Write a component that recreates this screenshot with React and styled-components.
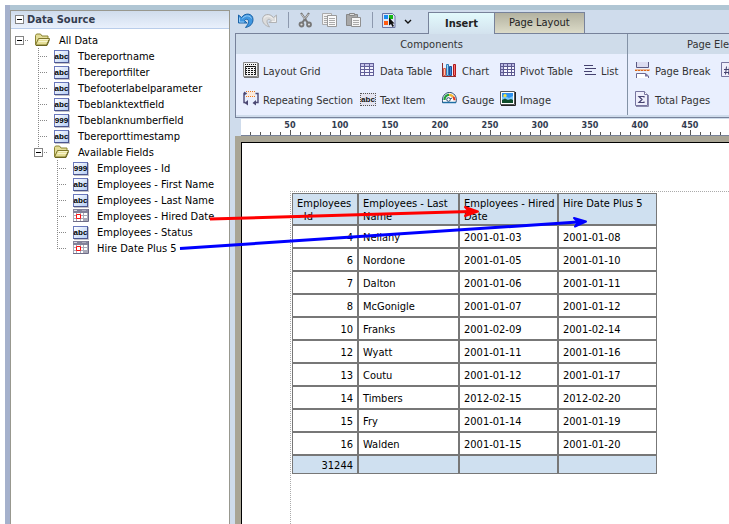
import React from 'react'
import styled, { createGlobalStyle } from 'styled-components'

const GlobalStyle = createGlobalStyle`
  * {
    box-sizing: border-box;
  }
  body {
    margin: 0;
    background: #fff;
    color: #000;
    font-family: "DejaVu Sans Condensed", "DejaVu Sans", sans-serif;
    font-size: 11px;
    line-height: 16px;
  }
  button {
    margin: 0;
    padding: 0;
    border: 0;
    background: none;
    color: inherit;
    font: inherit;
    cursor: pointer;
  }
  svg {
    display: block;
    flex: none;
  }
`

const FIELDS = [
  { name: 'Employees - Id', type: '999' },
  { name: 'Employees - First Name', type: 'abc' },
  { name: 'Employees - Last Name', type: 'abc' },
  { name: 'Employees - Hired Date', type: 'date' },
  { name: 'Employees - Status', type: 'abc' },
  { name: 'Hire Date Plus 5', type: 'date' },
]

const TREE = [
  { name: 'Tbereportname', type: 'abc' },
  { name: 'Tbereportfilter', type: 'abc' },
  { name: 'Tbefooterlabelparameter', type: 'abc' },
  { name: 'Tbeblanktextfield', type: 'abc' },
  { name: 'Tbeblanknumberfield', type: '999' },
  { name: 'Tbereporttimestamp', type: 'abc' },
  { name: 'Available Fields', children: FIELDS },
]

const ROWS = [
  ['4', 'Nellany', '2001-01-03', '2001-01-08'],
  ['6', 'Nordone', '2001-01-05', '2001-01-10'],
  ['7', 'Dalton', '2001-01-06', '2001-01-11'],
  ['8', 'McGonigle', '2001-01-07', '2001-01-12'],
  ['10', 'Franks', '2001-02-09', '2001-02-14'],
  ['12', 'Wyatt', '2001-01-11', '2001-01-16'],
  ['13', 'Coutu', '2001-01-12', '2001-01-17'],
  ['14', 'Timbers', '2012-02-15', '2012-02-20'],
  ['15', 'Fry', '2001-01-14', '2001-01-19'],
  ['16', 'Walden', '2001-01-15', '2001-01-20'],
]

const MARKS = [50, 100, 150, 200, 250, 300, 350, 400, 450]

/* ---------- icons ---------- */

const Icon = ({ children, w = 16, h = 16 }) => (
  <svg width={w} height={h} viewBox={`0 0 ${w} ${h}`} aria-hidden="true">{children}</svg>
)

const FolderIcon = () => (
  <Icon>
    <path d="M.5 12.5V3.5l1-1.500h4l1.500 2h6v3" fill="#e2dc98" stroke="#8b8433" />
    <path d="M.5 13L3.500 6.500H14.500L11.500 13Z" fill="#e6df98" stroke="#7d762a" />
    <path d="M4.500 7.500h9M3.500 9.500h9" stroke="#f8f5cf" />
    <path d="M1 13.500h11l2.500-6" fill="none" stroke="#6b651f" />
  </Icon>
)

const CalendarIcon = () => (
  <Icon>
    <path d="M0 1h15v12H0z" fill="#a9a9b8" />
    <path d="M0 1h15v4H0z" fill="#83829a" />
    <path d="M1 2.500h3" stroke="#d6d6e2" />
    <path d="M9 2.500h4" stroke="#a9a8bd" />
    <path d="M1 5h2v2H1zM4 5h3v2H4zM8 5h2v2H8zM11 5h3v2h-3zM1 8h2v2H1zM8 8h2v2H8zM11 8h3v2h-3zM1 11h2v2H1zM4 11h3v2H4zM8 11h2v2H8z" fill="#fff" />
    <path d="M3.500 6.500h4v4h-4z" fill="#fff" stroke="#ff1010" />
    <path d="M0 13.500h15.500V1" fill="none" stroke="#6d6b86" />
  </Icon>
)

const UndoIcon = () => (
  <Icon>
    <path d="M.5 3v8h8.500L6.500 8.500C8 6.500 10.500 7 10.500 9.500c0 2-1 3.500-3 6C12.500 14.500 15 11.500 15 7.500 15 1.500 7.500 0 3.500 5.500z" fill="#3f96e0" stroke="#1a62a6" strokeLinejoin="round" />
    <path d="M1.500 5.500v4.500h4.500M4.500 6.500c3-4 8-3 9 0" fill="none" stroke="#a9d8fb" strokeWidth=".8" />
  </Icon>
)

const RedoIcon = () => (
  <Icon>
    <path d="M14.500 3v7.500H7L9 8.500C7.500 6.500 5 7 5 9.500c0 2 1 3 2.500 5.500C3 13.500.500 11 .5 7.500.5 2 7.500.5 11.500 5.500z" fill="#dcdcdc" stroke="#b0b2b5" strokeLinejoin="round" />
    <path d="M13.500 5.500v4H10M10.500 6.500c-3-3.500-7-3-8.500 0" fill="none" stroke="#f8f8f8" strokeWidth=".8" />
  </Icon>
)

const CutIcon = () => (
  <Icon>
    <path d="M3 1l6.500 9.500M11 1L4.500 10.500" stroke="#777" strokeWidth="2.200" />
    <path d="M3.500 2l3.500 5M10.500 2L7.500 6" stroke="#ddd" strokeWidth=".8" />
    <circle cx="3.500" cy="12.500" r="2" fill="#ddd" stroke="#777" strokeWidth="1.800" />
    <circle cx="11" cy="12.500" r="2" fill="#ddd" stroke="#777" strokeWidth="1.800" />
  </Icon>
)

const CopyIcon = () => (
  <Icon>
    <path d="M.5 1.500h9v11h-9z" fill="#f2f2f2" stroke="#aaa" />
    <path d="M2 4.500h3M2 6.500h3M2 8.500h3M2 10.500h3" stroke="#aaa" />
    <path d="M5.500 3.500h9v11h-9z" fill="#fafafa" stroke="#999" />
    <path d="M7 6.500h6M7 8.500h6M7 10.500h6M7 12.500h6" stroke="#aaa" />
  </Icon>
)

const PasteIcon = () => (
  <Icon>
    <path d="M.5 2.500h11v11H.5z" fill="#a8a8a8" stroke="#888" />
    <path d="M3.500 1.500h5v2h-5z" fill="#ddd" stroke="#888" />
    <path d="M5.500 5.500h9v9h-9z" fill="#f6f6f6" stroke="#909090" />
    <path d="M7 8.500h6M7 10.500h6M7 12.500h6" stroke="#aaa" />
  </Icon>
)

const SelectIcon = () => (
  <Icon w={14}>
    <path d="M.5 1.500h10l2.500 2.500v11.500H.5z" fill="#dfe6f6" stroke="#6b74a2" />
    <path d="M2 3h4v4H2z" fill="#1b8df0" />
    <path d="M7 3h4v4H7z" fill="#14b514" />
    <path d="M2 9h4v4H2z" fill="#ff5a10" />
    <path d="M7 5.500v8l2-1.500 1.500 3 1.500-1-1.500-2.500h2z" fill="#111" />
  </Icon>
)

const GridIcon = () => (
  <Icon>
    <path d="M.5 .5h14v14H.5z" fill="#f4f4f4" stroke="#8a8a8a" />
    <path d="M2 2.500h11" stroke="#111" strokeDasharray="1 1" />
    <path d="M2 4.500h11" stroke="#111" />
    <path d="M2 6.500h11M2 8.500h11M2 10.500h11M2 12.500h11" stroke="#111" strokeDasharray="2 1" />
    <path d="M2.500 4v9M12.500 4v9" stroke="#333" />
    <path d="M1 15.500h14.500V1" fill="none" stroke="#777" />
  </Icon>
)

const RepeatIcon = () => (
  <Icon>
    <path d="M4 1h8v5H4z" fill="#fdeadb" />
    <path d="M3 .5h10M3 5.500h10" stroke="#ef7a1a" strokeDasharray="1 1" />
    <path d="M3.500 2.500H1v9h1.500M12.500 2.500H15v9h-3" fill="none" stroke="#4b4873" strokeWidth="1.400" />
    <path d="M1 .5l3 2-3 2zM5 9v5.500L1.500 12zM13 9l-3.500 3L13 14.500z" fill="#4b4873" />
  </Icon>
)

const TableIcon = () => (
  <Icon>
    <path d="M0 2h13v11H0z" fill="#f3f3ff" />
    <path d="M0 2h13v3H0z" fill="#c6c4ea" />
    <path d="M0 1.500h14M0 4.500h14M0 7.500h14M0 10.500h14M0 13.500h14M.5 1v13M4.500 1v13M9.500 1v13M13.500 1v13" stroke="#625f98" />
  </Icon>
)

const PivotIcon = () => (
  <Icon>
    <path d="M0 2h15v11H0z" fill="#f6f6ff" />
    <path d="M0 2h15v3H0zM0 5h3v8H0z" fill="#bfbde6" />
    <path d="M0 1.500h15M0 4.500h15M0 7.500h15M0 10.500h15M0 13.500h15M.5 1v13M3.500 1v13M7.500 1v13M11.500 1v13M14.500 1v13" stroke="#5b588f" />
  </Icon>
)

const ChartIcon = () => (
  <Icon>
    <path d="M.5 1v13.500H14" fill="none" stroke="#8b2d2d" />
    <path d="M1.500 6.500h2v7h-2z" fill="#fbc4b4" stroke="#d8604c" />
    <path d="M4.500 2.500h2v11h-2z" fill="#9fd7f8" stroke="#2f7cb8" />
    <path d="M7.500 4.500h2v9h-2z" fill="#2f8be0" stroke="#1f4f98" />
    <path d="M11.500 2.500h2v11h-2z" fill="#f57575" stroke="#b01818" />
  </Icon>
)

const GaugeIcon = () => (
  <Icon>
    <path d="M.5 11.500C-.5 5 3.500 1.500 7.500 1.500s8 3.500 6.500 10z" fill="#fff" stroke="#27466b" />
    <path d="M2.500 9C2.500 6 4.500 3.800 7 3.800" fill="none" stroke="#1f9c3a" strokeWidth="2.200" />
    <path d="M7 3.800c2 0 3.200.8 4.200 2" fill="none" stroke="#f2b632" strokeWidth="2.200" />
    <path d="M11.200 5.800c1 1 1.300 2 1.300 3.500" fill="none" stroke="#e23a1c" strokeWidth="2.200" />
    <circle cx="6.500" cy="8.500" r="1.800" fill="#fff" stroke="#27466b" />
    <path d="M8 8l2-1" stroke="#27466b" />
    <path d="M.5 11.500h13.500" stroke="#1f6fa5" strokeWidth="1.500" />
  </Icon>
)

const ImageIcon = () => (
  <Icon>
    <path d="M.5 .5h14v13H.5z" fill="#fff" stroke="#555" />
    <path d="M2 2h11v10H2z" fill="#2f92f0" />
    <path d="M2 6l3-1 4 2 4-2v4H2z" fill="#7bc8fb" />
    <path d="M2 12V9l3-1.500L8 9l3-1 2 1v3z" fill="#0e4d2b" />
    <circle cx="5" cy="4.500" r="1.600" fill="#f6e33c" />
    <path d="M1 14.500h14.500V1" fill="none" stroke="#222" />
  </Icon>
)

const ListIcon = () => (
  <Icon w={13}>
    <path d="M0 3.500h9M1 6.500h11M0 9.500h8M1 12.500h11" stroke="#45426f" />
  </Icon>
)

const BreakIcon = () => (
  <Icon>
    <path d="M1.500 0v5.500h12V0" fill="#dcdcf0" stroke="#5b5982" />
    <path d="M0 8h15" stroke="#f08030" />
    <path d="M0 8.500h15" stroke="#d8661a" strokeDasharray="2 1" />
    <path d="M1.500 16v-4.500h9l3 2.500v2" fill="#fff" stroke="#6b6991" />
    <path d="M10 11l4 3.500h-4z" fill="#7a78a3" />
  </Icon>
)

const SigmaIcon = () => (
  <Icon>
    <path d="M.5 .5h9l3 3v11H.5z" fill="#eeeefb" stroke="#77759f" />
    <path d="M9.500 .5v3h3" fill="#fff" stroke="#77759f" />
    <path d="M9 6.500v-1H4l3 3-3 3h5v-1" fill="none" stroke="#45426f" strokeWidth="1.200" />
    <path d="M1 15.500h12.500V4" fill="none" stroke="#8c8aac" />
  </Icon>
)

const NumberIcon = () => (
  <Icon>
    <path d="M.5 .5h9l3 3v11H.5z" fill="#eeeefb" stroke="#77759f" />
    <path d="M5.500 4.500l-1 8M8.500 4.500l-1 8M3 7.500h7M3 10.500h7" stroke="#45426f" />
  </Icon>
)

/* ---------- shell ---------- */

const Page = styled.div`
  display: flex;
  min-height: 100vh;
  padding: 5px 0 0 5px;
  overflow: hidden;
`

const Frame = styled.div`
  flex: 1;
  min-width: 0;
  display: flex;
  gap: 5px;
  border-left: 5px solid #a5b1cc;
  background: #cfdcec;
  box-shadow: inset 0 5px #b0c6d4;
  padding-top: 5px;
`

const SidePanel = styled.aside`
  flex: none;
  width: 220px;
  border: 1px solid #98988f;
  border-width: 1px 1px 0;
  background: #fff;
`

const PanelHeader = styled.h2`
  display: flex;
  align-items: center;
  gap: 3px;
  height: 18px;
  margin: 0;
  padding-left: 4px;
  border-bottom: 1px solid #b9cdea;
  background: linear-gradient(#cfdcec, #e9f0fc);
  color: #333c4f;
  font-size: 11px;
  font-weight: bold;
`

const Toggle = styled.button`
  width: 9px;
  height: 9px;
  flex: none;
  border: 1px solid #848484;
  background: linear-gradient(#000, #000) center / 5px 1px no-repeat #fff;
`

/* ---------- tree ---------- */

const TreeArea = styled.div`
  padding-top: 3px;
`

const Tree = styled.ul`
  margin: 0;
  padding: 0 0 0 ${props => (props.$root ? '4px' : '19px')};
  list-style: none;
`

const TreeRow = styled.div`
  display: flex;
  align-items: center;
  height: 16px;
  white-space: nowrap;
`

const TreeSlot = styled.span`
  display: flex;
  align-items: center;
  align-self: stretch;
  flex: none;
  width: 20px;
  background:
    repeating-linear-gradient(#888 0 1px, transparent 1px 2px) 4px 0 / 1px ${props => (props.$root ? '0' : props.$last ? '8px' : '16px')} no-repeat,
    repeating-linear-gradient(90deg, #888 0 1px, transparent 1px 2px) 4px 8px / 9px 1px no-repeat;
`

const TreeLabel = styled.span`
  padding: 2px 0 0 8px;
`

const Chip = styled.span`
  display: flex;
  justify-content: center;
  width: 15px;
  height: 13px;
  margin-right: 1px;
  border: 1px solid #6a78bd;
  border-right-color: #4b558f;
  border-bottom-color: #4b558f;
  background: linear-gradient(135deg, #fff, #b5cdf5);
  box-shadow: 1px 1px #c4c4cc;
  font-family: "Liberation Sans Narrow", "Liberation Sans", sans-serif;
  font-size: 8px;
  font-weight: bold;
  line-height: 11px;
`

const TypeIcon = ({ type }) => {
  if (type === 'date') return <CalendarIcon />
  return <Chip>{type}</Chip>
}

const TreeNode = ({ node, root, last }) => (
  <li>
    <TreeRow>
      <TreeSlot $root={root} $last={last}>
        {node.children && <Toggle aria-label={`Collapse ${node.name}`} />}
      </TreeSlot>
      {node.children ? <FolderIcon /> : <TypeIcon type={node.type} />}
      <TreeLabel>{node.name}</TreeLabel>
    </TreeRow>
    {node.children && (
      <Tree>
        {node.children.map((child, i) => (
          <TreeNode key={child.name} node={child} last={i === node.children.length - 1} />
        ))}
      </Tree>
    )}
  </li>
)

/* ---------- ribbon ---------- */

const Workspace = styled.main`
  flex: 1;
  min-width: 0;
  display: flex;
  flex-direction: column;
`

const TopBar = styled.div`
  display: flex;
  align-items: stretch;
  height: 24px;
  padding-top: 2px;
  box-shadow: inset 0 -1px #77829a;
`

const Tools = styled.div`
  display: flex;
  align-items: flex-start;
  gap: 8px;
  width: 193px;
  padding-left: 3px;
`

const Divider = styled.span`
  width: 1px;
  height: 16px;
  margin: 0 1px 0 2px;
  background: #8d99ae;
`

const ToolButton = styled.button`
  height: 16px;
`

const Tab = styled.button`
  padding: 0 ${props => (props.$active ? '16px' : '14px')};
  border: 1px solid #77829a;
  border-bottom-width: ${props => (props.$active ? '0' : '1px')};
  border-left-width: ${props => (props.$active ? '1px' : '0')};
  background: ${props => (props.$active ? 'linear-gradient(#e2fafc, #d3e2ee)' : 'linear-gradient(#b3b2a0, #dcdbc8)')};
  color: #222;
  font-weight: ${props => (props.$active ? 'bold' : 'normal')};
`

const Ribbon = styled.div`
  display: flex;
  overflow: hidden;
  height: 84px;
  padding: 0 0 2px;
  border-left: 1px solid #77829a;
  border-bottom: 1px solid #77829a;
`

const Group = styled.section`
  flex: none;
  width: ${props => props.$width};
  background: #e9effe;
  border-right: 1px solid #8392a6;
`

const GroupTitle = styled.h3`
  height: 20px;
  margin: 0;
  background: #cfdcea;
  color: #333;
  font-size: 11px;
  font-weight: normal;
  line-height: 22px;
  text-align: center;
`

const GroupItems = styled.div`
  display: grid;
  grid-template-columns: ${props => props.$columns};
  grid-auto-rows: 29px;
  align-items: start;
  padding: 8px 0 0 7px;
`

const RibbonButton = styled.button`
  display: flex;
  align-items: flex-start;
  gap: 4px;
  color: #333;
  text-align: left;
  white-space: nowrap;
  line-height: 20px;
`

const TextChip = styled.span`
  display: flex;
  justify-content: center;
  width: 16px;
  height: 13px;
  margin-top: 2px;
  border: 1px dotted #555;
  background: #e4e4f0;
  color: #111;
  font-family: "Liberation Sans Narrow", "Liberation Sans", sans-serif;
  font-size: 8px;
  font-weight: bold;
  line-height: 11px;
`

/* ---------- ruler and report ---------- */

const Ruler = styled.div`
  display: flex;
  overflow: hidden;
  height: 17px;
  margin: 1px 0 0 6px;
  padding-left: 24px;
  border-bottom: 1px solid #77829a;
  background:
    repeating-linear-gradient(90deg, #555 0 1px, transparent 1px 10px) 9px 100% / 100% 3px no-repeat #fff;
`

const Mark = styled.span`
  flex: none;
  width: 50px;
  background: linear-gradient(#555, #555) 25px 100% / 1px 5px no-repeat;
  color: #333c4f;
  font-size: 9px;
  font-weight: bold;
  line-height: 12px;
  text-align: center;
`

const Canvas = styled.div`
  flex: 1;
  display: flex;
  padding: 6px 0 0 6px;
  background: #a9a595;
`

const Sheet = styled.div`
  flex: 1;
  min-width: 0;
  padding: 48px 0 0 48px;
  border: 1px solid #000;
  border-width: 1px 0 0 1px;
  background: #fff;
`

const PrintArea = styled.div`
  height: 100%;
  padding: 1px;
  border: 1px dotted #aaa;
  border-width: 1px 0 0 1px;
`

const Report = styled.table`
  width: 365px;
  table-layout: fixed;
  border-collapse: separate;
  border-spacing: 0;
  line-height: 13px;

  th,
  td {
    padding: 2px 4px 0;
    border: 1px solid #777;
    font-weight: normal;
    text-align: left;
  }
  th {
    height: 32px;
    padding: 3px 0 0 4px;
    background: #cfe0f0;
    vertical-align: top;
  }
  td {
    height: 23px;
  }
  tfoot td {
    height: 19px;
    background: #cfe0f0;
  }
  td:first-child {
    text-align: right;
  }
`

const Arrows = styled.svg`
  position: absolute;
  top: 0;
  left: 0;
  pointer-events: none;
`

export default function App() {
  return (
    <>
      <GlobalStyle />
      <Page>
        <Frame>
          <SidePanel>
            <PanelHeader>
              <Toggle aria-label="Collapse Data Source" />
              Data Source
            </PanelHeader>
            <TreeArea>
              <Tree $root>
                <TreeNode root last node={{ name: 'All Data', children: TREE }} />
              </Tree>
            </TreeArea>
          </SidePanel>

          <Workspace>
            <TopBar>
              <Tools>
                <ToolButton aria-label="Undo"><UndoIcon /></ToolButton>
                <ToolButton aria-label="Redo"><RedoIcon /></ToolButton>
                <Divider />
                <ToolButton aria-label="Cut"><CutIcon /></ToolButton>
                <ToolButton aria-label="Copy"><CopyIcon /></ToolButton>
                <ToolButton aria-label="Paste"><PasteIcon /></ToolButton>
                <Divider />
                <ToolButton aria-label="Select"><SelectIcon /></ToolButton>
                <ToolButton aria-label="More">
                  <Icon w={8}><path d="M1 8l3 3 3-3" fill="none" stroke="#111" strokeWidth="1.400" /></Icon>
                </ToolButton>
              </Tools>
              <Tab $active>Insert</Tab>
              <Tab>Page Layout</Tab>
            </TopBar>

            <Ribbon>
              <Group $width="392px">
                <GroupTitle>Components</GroupTitle>
                <GroupItems $columns="117px 82px 58px 84px auto">
                  <RibbonButton><GridIcon />Layout Grid</RibbonButton>
                  <RibbonButton><TableIcon />Data Table</RibbonButton>
                  <RibbonButton><ChartIcon />Chart</RibbonButton>
                  <RibbonButton><PivotIcon />Pivot Table</RibbonButton>
                  <RibbonButton><ListIcon />List</RibbonButton>
                  <RibbonButton><RepeatIcon />Repeating Section</RibbonButton>
                  <RibbonButton><TextChip>abc</TextChip>Text Item</RibbonButton>
                  <RibbonButton><GaugeIcon />Gauge</RibbonButton>
                  <RibbonButton><ImageIcon />Image</RibbonButton>
                </GroupItems>
              </Group>
              <Group $width="192px">
                <GroupTitle>Page Elements</GroupTitle>
                <GroupItems $columns="86px auto">
                  <RibbonButton><BreakIcon />Page Break</RibbonButton>
                  <RibbonButton aria-label="Page Number"><NumberIcon /></RibbonButton>
                  <RibbonButton><SigmaIcon />Total Pages</RibbonButton>
                </GroupItems>
              </Group>
            </Ribbon>

            <Ruler>
              {MARKS.map(n => <Mark key={n}>{n}</Mark>)}
            </Ruler>

            <Canvas>
              <Sheet>
                <PrintArea>
                  <Report>
                    <colgroup>
                      <col width="66" />
                      <col width="101" />
                      <col width="99" />
                      <col width="99" />
                    </colgroup>
                    <thead>
                      <tr>
                        <th>Employees - Id</th>
                        <th>Employees - Last Name</th>
                        <th>Employees - Hired Date</th>
                        <th>Hire Date Plus 5</th>
                      </tr>
                    </thead>
                    <tbody>
                      {ROWS.map(row => (
                        <tr key={row[0]}>
                          {row.map((cell, i) => <td key={i}>{cell}</td>)}
                        </tr>
                      ))}
                    </tbody>
                    <tfoot>
                      <tr>
                        <td>31244</td>
                        <td />
                        <td />
                        <td />
                      </tr>
                    </tfoot>
                  </Report>
                </PrintArea>
              </Sheet>
            </Canvas>
          </Workspace>
        </Frame>
      </Page>

      <Arrows width="600" height="260" viewBox="0 0 600 260" strokeWidth="3" strokeLinejoin="round">
        <path d="M210 219L470 211.500" stroke="#f00" />
        <path d="M465 207L478 211.500L465 216L469 211.500Z" fill="#f00" stroke="#f00" strokeWidth="2" />
        <path d="M180 248.500L578 222" stroke="#00f" />
        <path d="M574 218L586 221.500L575 226.500L578 222Z" fill="#00f" stroke="#00f" strokeWidth="2" />
      </Arrows>
    </>
  )
}
